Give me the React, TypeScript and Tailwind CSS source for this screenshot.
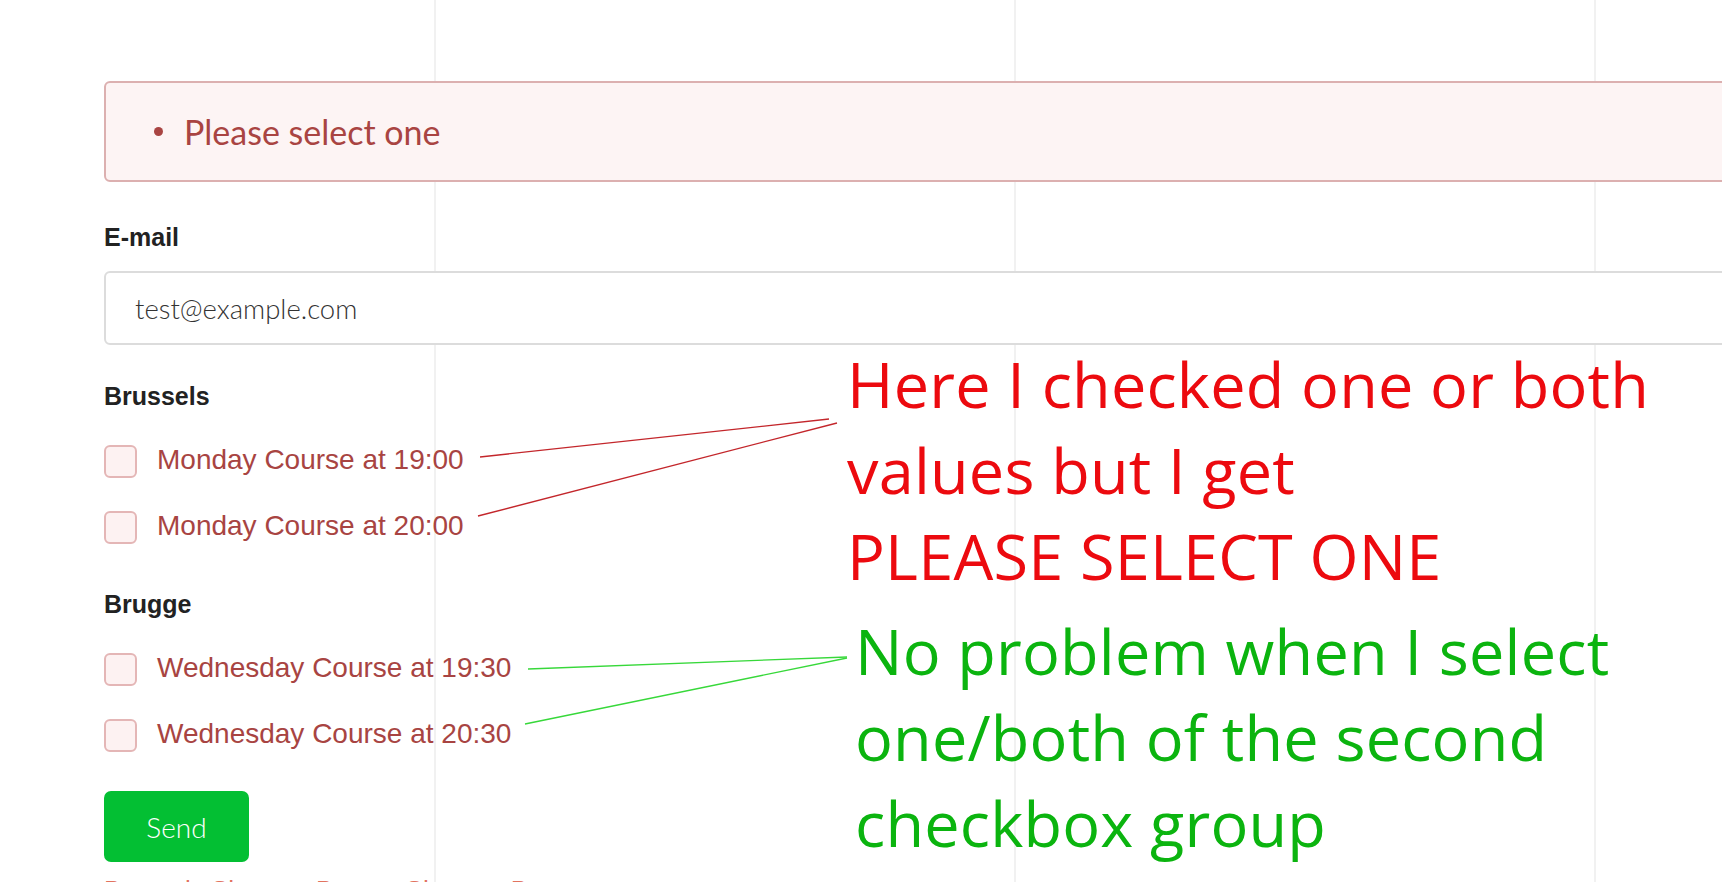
import React from 'react'

const courses = [
  {
    city: 'Brussels',
    slots: ['Monday Course at 19:00', 'Monday Course at 20:00'],
    gapTop: 'mt-[39px]',
  },
  {
    city: 'Brugge',
    slots: ['Wednesday Course at 19:30', 'Wednesday Course at 20:30'],
    gapTop: 'mt-[48px]',
  },
]

function Checkbox({ label }: { label: string }) {
  return (
    <label className="flex items-center gap-[20px] cursor-pointer">
      <span className="block h-[33px] w-[33px] shrink-0 rounded-[6px] border-2 border-[#e4b6b6] bg-[#fdf2f2]" />
      <span className="pb-[4px] font-['Liberation_Sans',Arial,sans-serif] text-[28px] leading-none text-[#a84442]">
        {label}
      </span>
    </label>
  )
}

function Annotations() {
  return (
    <>
      <svg
        className="pointer-events-none absolute left-0 top-0"
        width="1722"
        height="882"
        viewBox="0 0 1722 882"
      >
        <line x1="480" y1="457" x2="829" y2="419" stroke="#c3262b" strokeWidth="1.3" />
        <line x1="478" y1="516" x2="837" y2="423" stroke="#c3262b" strokeWidth="1.3" />
        <line x1="528" y1="669" x2="847" y2="657" stroke="#37d83a" strokeWidth="1.3" />
        <line x1="525" y1="724" x2="847" y2="658" stroke="#37d83a" strokeWidth="1.3" />
      </svg>
      <div className="pointer-events-none absolute left-[847px] top-[341px] whitespace-nowrap font-['Open_Sans',sans-serif] text-[63px] leading-[86px] tracking-[0.2px] text-[#ec0a0f]">
        <div>Here I checked one or both</div>
        <div>values but I get</div>
        <div>PLEASE SELECT ONE</div>
      </div>
      <div className="pointer-events-none absolute left-[855px] top-[608px] whitespace-nowrap font-['Open_Sans',sans-serif] text-[63px] leading-[86px] tracking-[0.2px] text-[#0bb40f]">
        <div>No problem when I select</div>
        <div>one/both of the second</div>
        <div>checkbox group</div>
      </div>
    </>
  )
}

export default function App(): JSX.Element {
  return (
    <div className="relative h-[882px] w-full overflow-hidden bg-white bg-[image:repeating-linear-gradient(to_right,transparent_0px,transparent_434px,#f1f1f1_434px,#f1f1f1_436px,transparent_436px,transparent_580px)]">
      <form className="flex w-[1900px] flex-col pl-[104px] pt-[81px]">
        <div className="flex h-[101px] items-center rounded-[6px] border-2 border-[#dcb0b0] bg-[#fdf4f4] pl-[48px]">
          <ul className="flex items-center gap-[21px]">
            <span className="block h-[9px] w-[9px] rounded-full bg-[#a94442]" />
            <li className="font-['Lato',sans-serif] text-[34px] leading-none text-[#a94442]">
              Please select one
            </li>
          </ul>
        </div>

        <label className="mt-[43px] font-['Liberation_Sans',Arial,sans-serif] text-[25px] font-bold leading-[25px] text-[#222]">
          E-mail
        </label>
        <input
          readOnly
          value="test@example.com"
          className="mt-[21px] h-[74px] rounded-[6px] border-2 border-[#dcdcdc] bg-white pl-[29px] font-['Lato',sans-serif] text-[27.5px] font-light text-[#333] outline-none"
        />

        {courses.map((group) => (
          <div key={group.city} className={'flex flex-col ' + group.gapTop}>
            <div className="font-['Liberation_Sans',Arial,sans-serif] text-[25px] font-bold leading-[25px] text-[#222]">
              {group.city}
            </div>
            <div className="mt-[36px] flex flex-col gap-[33px]">
              {group.slots.map((slot) => (
                <Checkbox key={slot} label={slot} />
              ))}
            </div>
          </div>
        ))}

        <button
          type="submit"
          className="mt-[39px] h-[71px] w-[145px] rounded-[7px] bg-[#03bf33] font-['Lato',sans-serif] text-[28px] font-light text-white"
        >
          Send
        </button>

        <div className="mt-[15px] flex gap-[40px] font-['Liberation_Sans',Arial,sans-serif] text-[26px] leading-none text-[#e2735f]">
          <span>Brussels Show</span>
          <span>Bruges Show</span>
          <span>Bruges</span>
        </div>
      </form>
      <Annotations />
    </div>
  )
}
